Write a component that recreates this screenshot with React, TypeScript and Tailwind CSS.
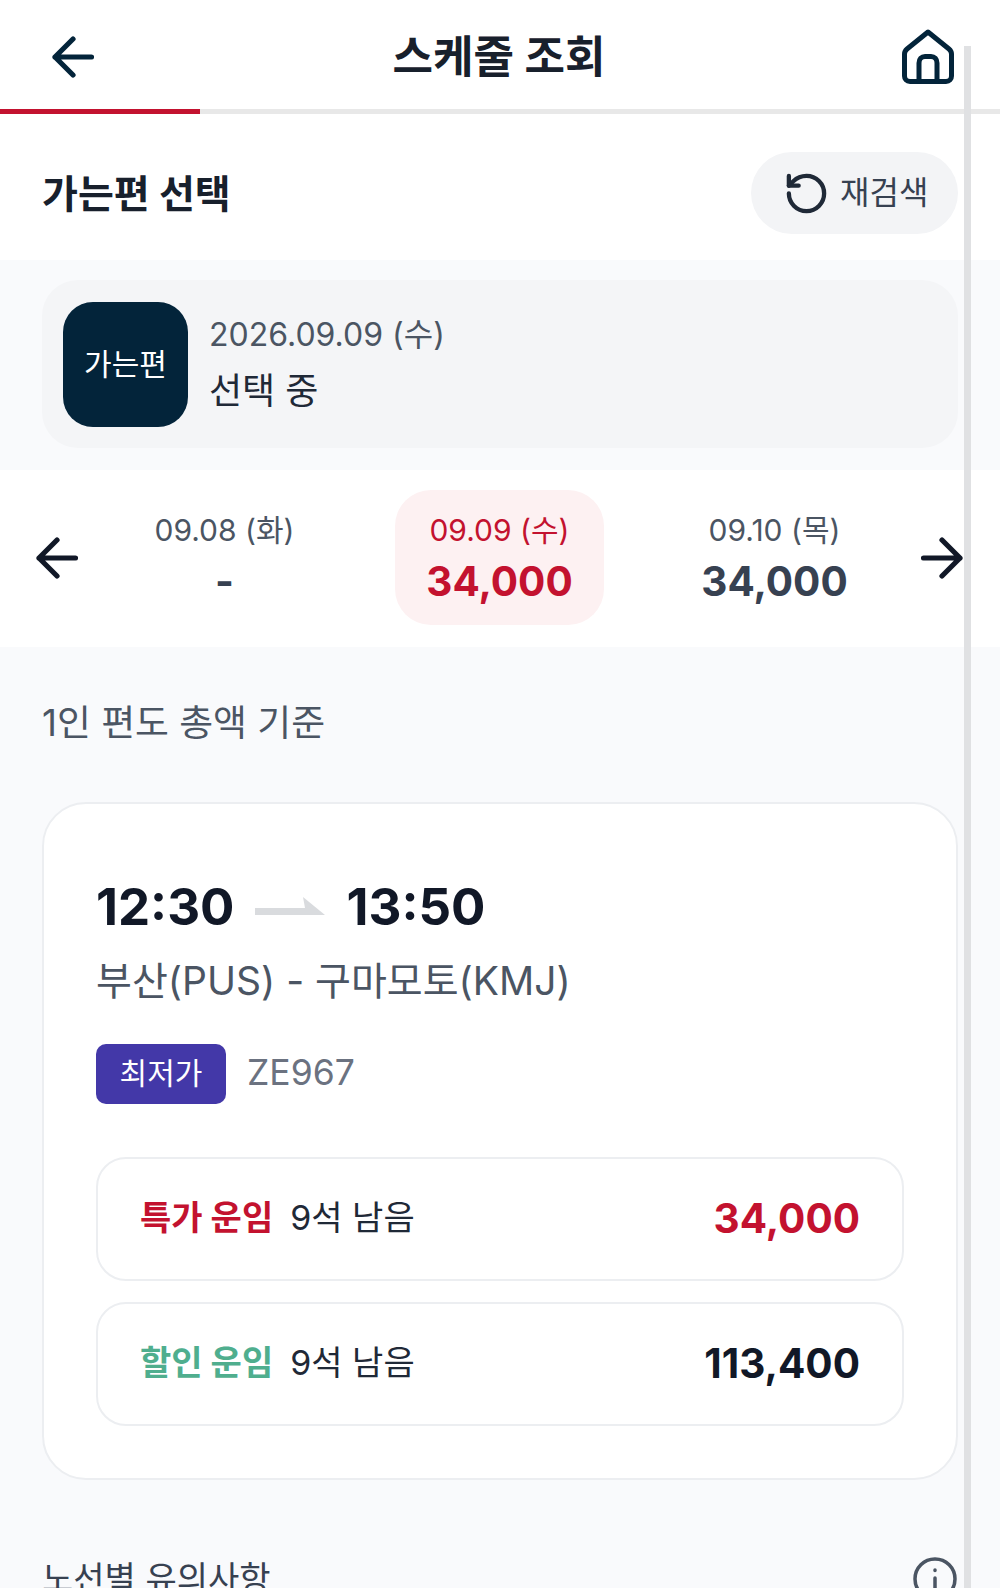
import * as React from 'react';
import { RotateCcw } from 'lucide-react';

const ArrowLeft = ({ className }: { className?: string }) => (
	<svg viewBox="0 0 42 42" fill="none" stroke="currentColor" strokeWidth="5.2" strokeLinecap="round" strokeLinejoin="round" className={className}>
		<path d="M39.500 21H3M21 3 3 21 21 39" />
	</svg>
);

const ArrowRight = ({ className }: { className?: string }) => (
	<svg viewBox="0 0 42 42" fill="none" stroke="currentColor" strokeWidth="5.2" strokeLinecap="round" strokeLinejoin="round" className={className}>
		<path d="M2.500 21H39M21 3l18 18-18 18" />
	</svg>
);

const HomeIcon = () => (
	<svg viewBox="0 0 52 55" fill="none" stroke="#03243a" strokeWidth="5" strokeLinejoin="round" strokeLinecap="round" className="h-[55px] w-[52px]">
		<path d="M26 3 5 20c-1.600 1.300-2.500 3-2.500 5v22c0 3 2 5.500 5.500 5.500h36c3.500 0 5.500-2.500 5.500-5.500V25c0-2-.9-3.700-2.500-5z" />
		<path d="M17 52V34c0-4 2.500-6.500 6-6.500h6c3.500 0 6 2.500 6 6.500v18" />
	</svg>
);

const DateCell = ({ date, price, active }: { date: string; price: string; active?: boolean }) => (
	<div className={`flex h-[135px] w-[209px] flex-col items-center rounded-[36px] pt-[19px] ${active ? 'bg-[#fdf1f2] text-[#c3122f]' : 'text-[#4b5563]'}`}>
		<span className="text-[30px] leading-[42px]">{date}</span>
		<span className={`mt-[5px] text-[40.5px] leading-[52px] font-bold ${active ? '' : 'text-[#374151]'}`}>{price}</span>
	</div>
);

const FareRow = ({ name, color, price, priceColor }: { name: string; color: string; price: string; priceColor: string }) => (
	<div className="flex h-[124px] items-center justify-between rounded-[30px] border-2 border-[#eceef1] bg-white pr-[42px] pl-[42px]">
		<div className="flex items-center gap-[17px] pb-[4px]">
			<span className={`text-[34px] font-bold ${color}`}>{name}</span>
			<span className="text-[34px] text-[#1f2937]">9석 남음</span>
		</div>
		<span className={`text-[40.5px] font-bold ${priceColor}`}>{price}</span>
	</div>
);

export default function App() {
	return (
		<div className="relative h-[1588px] w-[1000px] overflow-hidden bg-[#f9fafc] font-['Inter','Noto_Sans_CJK_KR',sans-serif] text-[#111827]">
			{/* header */}
			<header className="flex h-[109px] items-center justify-between bg-white pt-[4px] pr-[46px] pl-[52px]">
				<ArrowLeft className="h-[42px] w-[42px] text-[#03243a]" />
				<h1 className="ml-[2px] text-[44px] leading-none font-bold text-[#18202c]">스케줄 조회</h1>
				<HomeIcon />
			</header>
			<div className="h-[5px] bg-[#e8e8e8]">
				<div className="h-full w-[200px] bg-[#c3122f]" />
			</div>

			{/* title */}
			<section className="flex h-[146px] items-center justify-between bg-white pt-[12px] pr-[42px] pl-[42px]">
				<h2 className="text-[39px] leading-none font-bold text-[#18202c]">가는편 선택</h2>
				<button className="flex h-[82px] w-[207px] items-center gap-[10px] rounded-[41px] bg-[#f3f4f6] pl-[32px] text-[32px] text-[#374151]">
					<RotateCcw className="h-[47px] w-[47px] text-[#1f2937]" strokeWidth={2.2} />
					재검색
				</button>
			</section>

			{/* selected leg */}
			<section className="h-[210px] pt-[20px] pr-[42px] pl-[42px]">
				<div className="flex h-[168px] items-center gap-[21px] rounded-[36px] bg-[#f4f5f7] pl-[21px]">
					<div className="flex h-[125px] w-[125px] items-center justify-center rounded-[30px] bg-[#03243a] text-[30px] text-white">가는편</div>
					<div className="flex flex-col pb-[2px]">
						<span className="text-[32px] leading-[44px] text-[#4b5563]">2026.09.09 (수)</span>
						<span className="mt-[12px] text-[36px] leading-[44px] text-[#1f2937]">선택 중</span>
					</div>
				</div>
			</section>

			{/* date strip */}
			<section className="flex h-[177px] items-center bg-white pb-[2px] pl-[36px]">
				<ArrowLeft className="h-[42px] w-[42px] text-[#111827]" />
				<div className="ml-[42px] flex gap-[66px]">
					<DateCell date="09.08 (화)" price="-" />
					<DateCell date="09.09 (수)" price="34,000" active />
					<DateCell date="09.10 (목)" price="34,000" />
				</div>
				<ArrowRight className="ml-[42px] h-[42px] w-[42px] text-[#111827]" />
			</section>

			{/* results */}
			<main className="pr-[42px] pl-[42px]">
				<p className="mt-[52px] text-[36.8px] leading-[48px] text-[#4b5563]">1인 편도 총액 기준</p>
				<div className="mt-[55px] h-[678px] rounded-[44px] border-2 border-[#eceef1] bg-white pt-[69px] pr-[52px] pl-[52px]">
					<div className="flex h-[66px] items-center">
						<span className="text-[51px] leading-none font-bold">12:30</span>
						<svg viewBox="0 0 70 18" className="mr-[21px] ml-[21px] h-[18px] w-[70px] fill-[#d9dbde]">
							<path d="M0 11h50L48 0l22 18H0z" />
						</svg>
						<span className="text-[51px] leading-none font-bold">13:50</span>
					</div>
					<p className="mt-[17px] text-[39px] leading-[50px] text-[#4b5563]">부산(PUS) - 구마모토(KMJ)</p>
					<div className="mt-[38px] flex items-center gap-[21px]">
						<span className="flex h-[60px] w-[130px] items-center justify-center rounded-[10px] bg-[#4338a8] pb-[2px] text-[30px] text-white">최저가</span>
						<span className="pb-[2px] text-[35.5px] text-[#6b7280]">ZE967</span>
					</div>
					<div className="mt-[53px] flex flex-col gap-[21px]">
						<FareRow name="특가 운임" color="text-[#c3122f]" price="34,000" priceColor="text-[#c3122f]" />
						<FareRow name="할인 운임" color="text-[#4fae8e]" price="113,400" priceColor="text-[#111827]" />
					</div>
				</div>
				<div className="mt-[77px] flex items-start justify-between">
					<span className="text-[34px] leading-[44px] text-[#374151]">노선별 유의사항</span>
					<svg viewBox="0 0 44 44" fill="none" stroke="#4b5563" strokeWidth="3.5" strokeLinecap="round" className="mr-[1px] h-[44px] w-[44px]">
						<circle cx="22" cy="22" r="20" />
						<path d="M22 21v11M22 13v.5" />
					</svg>
				</div>
			</main>

			{/* scrollbar overlay */}
			<div className="absolute top-[46px] right-[29px] bottom-0 w-[7px] bg-[#e0e1e3]" />
		</div>
	);
}
